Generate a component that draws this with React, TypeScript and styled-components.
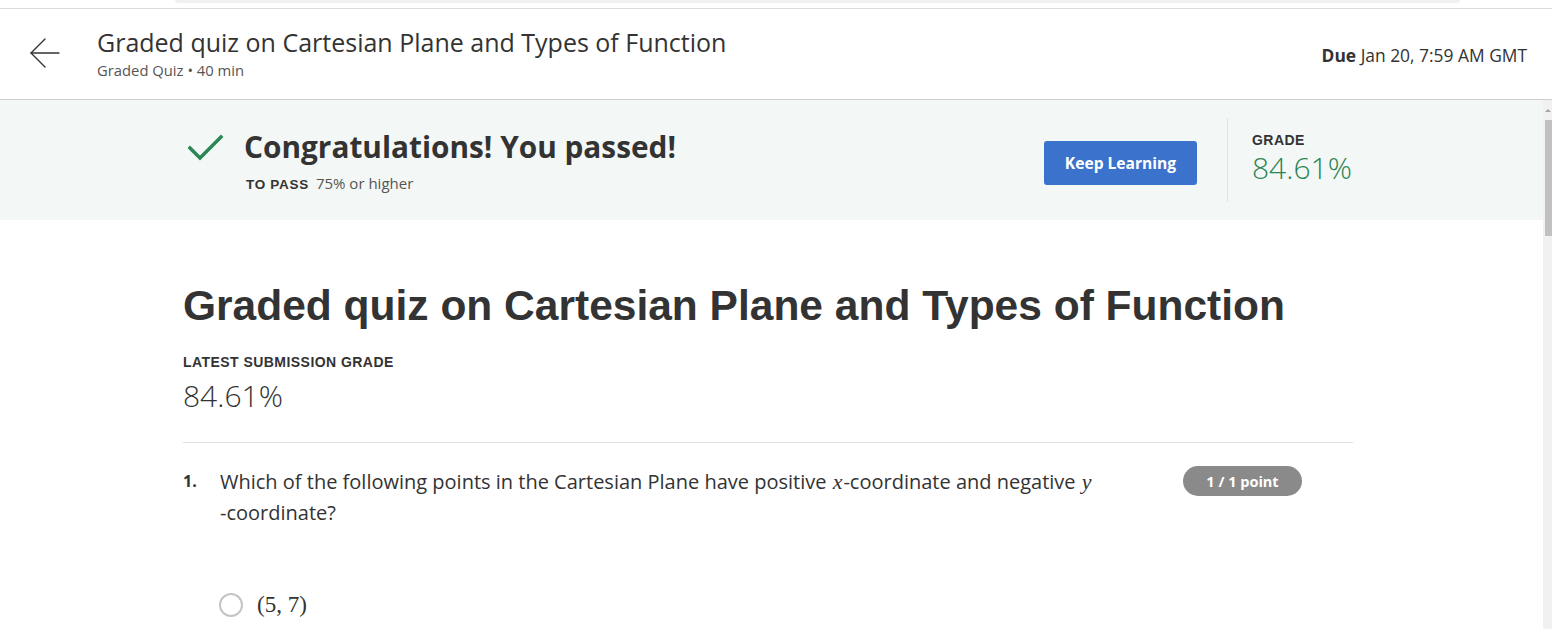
import React from "react";
import styled, { createGlobalStyle } from "styled-components";

const Global = createGlobalStyle`
  html, body { margin: 0; padding: 0; background: #fff; overflow: hidden; }
  body { font-family: "Open Sans", "Liberation Sans", sans-serif; color: #333; }
  * { box-sizing: border-box; }
`;

const Page = styled.div`
  width: 1552px;
  height: 629px;
  display: flex;
  flex-direction: column;
  overflow: hidden;
`;

const TopStrip = styled.div`
  height: 9px;
  border-bottom: 1px solid #dcdcdc;
  padding: 0 92px 0 175px;
`;

const ChromePill = styled.div`
  height: 3px;
  background: #eef0f2;
  border-radius: 0 0 10px 10px;
`;

const Header = styled.header`
  height: 91px;
  display: flex;
  align-items: center;
  padding: 0 25px 0 28px;
  border-bottom: 1px solid #cfcfcf;
`;

const BackButton = styled.button`
  width: 34px;
  height: 34px;
  padding: 0;
  border: none;
  background: none;
  display: flex;
  align-items: center;
  justify-content: center;
  margin-right: 35px;
  margin-top: -2px;
`;

const HeaderText = styled.div`
  flex: 1;
  display: flex;
  flex-direction: column;
  margin-top: 0px;
`;

const HeaderTitle = styled.h1`
  margin: 0;
  font-size: 25px;
  font-weight: 400;
  line-height: 30px;
  color: #333;
`;

const HeaderSub = styled.div`
  font-size: 14.8px;
  line-height: 22px;
  margin-top: 2px;
  color: #555;
`;

const Due = styled.div`
  font-size: 17.4px;
  color: #333;
  margin-top: 1px;
  b { font-weight: 700; }
`;

const Body = styled.div`
  flex: 1;
  display: flex;
  min-height: 0;
`;

const Scroll = styled.main`
  flex: 1;
  min-width: 0;
`;

const ScrollTrack = styled.div`
  width: 9px;
  background: #f1f1f1;
  display: flex;
  flex-direction: column;
  align-items: flex-end;
  padding-top: 9px;
`;

const ScrollArrow = styled.div`
  width: 0;
  height: 0;
  border-left: 3px solid transparent;
  border-right: 3px solid transparent;
  border-bottom: 3px solid #a3a3a3;
  margin-right: 1px;
`;

const ScrollThumb = styled.div`
  width: 7px;
  height: 116px;
  margin-top: 8px;
  background: #c1c1c1;
`;

const Banner = styled.section`
  height: 120px;
  background: #f3f8f6;
`;

const Container = styled.div`
  width: 1170px;
  margin-left: 183px;
`;

const BannerInner = styled(Container)`
  height: 100%;
  display: flex;
  align-items: center;
`;

const PassBlock = styled.div`
  flex: 1;
  display: flex;
  align-items: flex-start;
  padding-left: 5px;
  margin-top: 0px;
`;

const CheckWrap = styled.div`
  width: 36px;
  height: 30px;
  margin-top: 6px;
  margin-right: 20px;
`;

const PassText = styled.div`
  display: flex;
  flex-direction: column;
`;

const PassTitle = styled.h2`
  margin: 0;
  font-size: 29.8px;
  line-height: 38px;
  font-weight: 700;
  color: #333;
`;

const PassNote = styled.div`
  margin-top: 7px;
  margin-left: 2px;
  font-size: 15px;
  color: #555;
  display: flex;
  align-items: baseline;
  gap: 7px;
`;

const SmallCaps = styled.span`
  font-family: "Liberation Sans", Arial, sans-serif;
  font-weight: 700;
  font-size: 13.5px;
  color: #333;
  letter-spacing: 0.7px;
`;

const PrimaryButton = styled.button`
  width: 153px;
  height: 44px;
  border: none;
  border-radius: 3px;
  background: #3b73cc;
  color: #fff;
  font-family: "Open Sans", sans-serif;
  font-weight: 700;
  font-size: 15.6px;
  margin-top: 6px;
`;

const VDivider = styled.div`
  width: 1px;
  height: 84px;
  background: #dfe3e1;
  margin: 0 24px 0 30px;
`;

const GradeBlock = styled.div`
  width: 101px;
  display: flex;
  flex-direction: column;
  margin-top: -3px;
`;

const Label = styled.div`
  font-family: "Liberation Sans", Arial, sans-serif;
  font-weight: 700;
  font-size: 14px;
  line-height: 18px;
  color: #333;
  letter-spacing: 0.45px;
`;

const GradeValue = styled.div<{ $green?: boolean }>`
  font-size: 30px;
  line-height: 38px;
  font-weight: 300;
  color: ${(p) => (p.$green ? "#2b8452" : "#333")};
  white-space: nowrap;
`;

const Main = styled(Container)`
  padding-top: 60px;
`;

const PageTitle = styled.h1`
  margin: 0;
  font-family: "Liberation Sans", Arial, sans-serif;
  font-weight: 700;
  font-size: 42.5px;
  line-height: 52px;
  color: #333;
  white-space: nowrap;
`;

const SubmissionBlock = styled.div`
  margin-top: 21px;
  display: flex;
  flex-direction: column;
  gap: 6px;
`;

const Rule = styled.hr`
  margin: 27px 0 0;
  border: none;
  border-top: 1px solid #e1e1e1;
`;

const Question = styled.div`
  display: flex;
  align-items: flex-start;
  padding-top: 23px;
`;

const QNum = styled.div`
  width: 37px;
  font-size: 16px;
  font-weight: 700;
  line-height: 31px;
  color: #333;
`;

const QText = styled.div`
  width: 940px;
  font-size: 20px;
  line-height: 31px;
  color: #333;
  margin-right: 23px;
`;

const MathVar = styled.span`
  display: inline-block;
  font-family: "Liberation Serif", "DejaVu Serif", serif;
  font-style: italic;
  font-size: 22px;
  line-height: 1;
  margin: 0 1px;
`;

const Wrappable = styled.span`
  display: inline-block;
`;

const PointPill = styled.div`
  width: 119px;
  height: 30px;
  border-radius: 15px;
  background: #8a8a8a;
  color: #fff;
  font-size: 14.5px;
  font-weight: 700;
  display: flex;
  align-items: center;
  justify-content: center;
`;

const Options = styled.div`
  padding: 64px 0 0 36px;
`;

const Option = styled.label`
  display: flex;
  align-items: center;
  gap: 14px;
`;

const Radio = styled.span`
  width: 24px;
  height: 24px;
  border-radius: 50%;
  border: 2.5px solid #c4c4c4;
  background: #fff;
`;

const MathText = styled.span`
  font-family: "Liberation Serif", "DejaVu Serif", serif;
  font-size: 23px;
  color: #333;
`;

export default function App() {
  return (
    <Page>
      <Global />
      <TopStrip>
        <ChromePill />
      </TopStrip>
      <Header>
        <BackButton aria-label="Back">
          <svg width="32" height="32" viewBox="0 0 32 32" fill="none" stroke="#333" strokeWidth="1.4" strokeLinecap="round" strokeLinejoin="round">
            <path d="M2 16 H30" />
            <path d="M16 2 L2 16 L16 30" />
          </svg>
        </BackButton>
        <HeaderText>
          <HeaderTitle>Graded quiz on Cartesian Plane and Types of Function</HeaderTitle>
          <HeaderSub>Graded Quiz • 40 min</HeaderSub>
        </HeaderText>
        <Due>
          <b>Due</b> Jan 20, 7:59 AM GMT
        </Due>
      </Header>
      <Body>
        <Scroll>
          <Banner>
            <BannerInner>
              <PassBlock>
                <CheckWrap>
                  <svg width="36" height="30" viewBox="0 0 36 30" fill="none" stroke="#2a8652" strokeWidth="3.4" strokeLinecap="square">
                    <path d="M2 14 L12 24 L33 3" />
                  </svg>
                </CheckWrap>
                <PassText>
                  <PassTitle>Congratulations! You passed!</PassTitle>
                  <PassNote>
                    <SmallCaps>TO PASS</SmallCaps>
                    <span>75% or higher</span>
                  </PassNote>
                </PassText>
              </PassBlock>
              <PrimaryButton>Keep Learning</PrimaryButton>
              <VDivider />
              <GradeBlock>
                <Label>GRADE</Label>
                <GradeValue $green>84.61%</GradeValue>
              </GradeBlock>
            </BannerInner>
          </Banner>
          <Main>
            <PageTitle>Graded quiz on Cartesian Plane and Types of Function</PageTitle>
            <SubmissionBlock>
              <Label>LATEST SUBMISSION GRADE</Label>
              <GradeValue>84.61%</GradeValue>
            </SubmissionBlock>
            <Rule />
            <Question>
              <QNum>1.</QNum>
              <QText>
                Which of the following points in the Cartesian Plane have positive <MathVar>x</MathVar>-coordinate and negative <MathVar>y</MathVar><Wrappable>-coordinate?</Wrappable>
              </QText>
              <PointPill>1 / 1 point</PointPill>
            </Question>
            <Options>
              <Option>
                <Radio />
                <MathText>(5, 7)</MathText>
              </Option>
            </Options>
          </Main>
        </Scroll>
        <ScrollTrack>
          <ScrollArrow />
          <ScrollThumb />
        </ScrollTrack>
      </Body>
    </Page>
  );
}
